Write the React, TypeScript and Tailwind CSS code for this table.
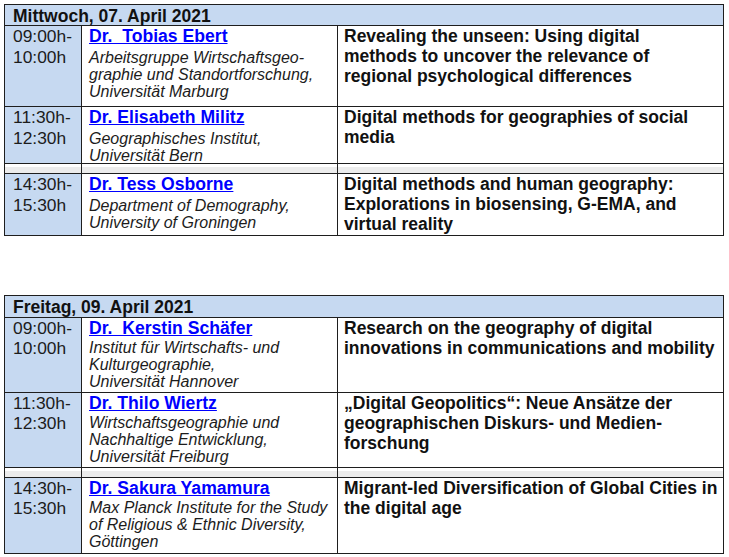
type Talk = {
  time: [string, string];
  name: string;
  affil: string[];
  title: string[];
};

const wednesday: Talk[] = [
  {
    time: ["09:00h-", "10:00h"],
    name: "Dr.\u00a0 Tobias Ebert",
    affil: ["Arbeitsgruppe Wirtschaftsgeo-", "graphie und Standortforschung,", "Universität Marburg"],
    title: ["Revealing the unseen: Using digital", "methods to uncover the relevance of", "regional psychological differences"],
  },
  {
    time: ["11:30h-", "12:30h"],
    name: "Dr. Elisabeth Militz",
    affil: ["Geographisches Institut,", "Universität Bern"],
    title: ["Digital methods for geographies of social", "media"],
  },
  {
    time: ["14:30h-", "15:30h"],
    name: "Dr. Tess Osborne",
    affil: ["Department of Demography,", "University of Groningen"],
    title: ["Digital methods and human geography:", "Explorations in biosensing, G-EMA, and", "virtual reality"],
  },
];

const friday: Talk[] = [
  {
    time: ["09:00h-", "10:00h"],
    name: "Dr.\u00a0 Kerstin Schäfer",
    affil: ["Institut für Wirtschafts- und", "Kulturgeographie,", "Universität Hannover"],
    title: ["Research on the geography of digital", "innovations in communications and mobility"],
  },
  {
    time: ["11:30h-", "12:30h"],
    name: "Dr. Thilo Wiertz",
    affil: ["Wirtschaftsgeographie und", "Nachhaltige Entwicklung,", "Universität Freiburg"],
    title: ["\u201EDigital Geopolitics\u201C: Neue Ansätze der", "geographischen Diskurs- und Medien-", "forschung"],
  },
  {
    time: ["14:30h-", "15:30h"],
    name: "Dr. Sakura Yamamura",
    affil: ["Max Planck Institute for the Study", "of Religious & Ethnic Diversity,", "Göttingen"],
    title: ["Migrant-led Diversification of Global Cities in", "the digital age"],
  },
];

const TalkCells = ({ talk, wide }: { talk: Talk; wide: boolean }) => (
  <>
    {/* time */}
    <div className={`bg-[#c6d9f1] pl-2 text-[17.4px] text-[#1c1c1c] ${wide ? "leading-[21px]" : "leading-[20px]"}`}>
      <div>{talk.time[0]}</div>
      <div>{talk.time[1]}</div>
    </div>

    {/* speaker */}
    <div className="bg-white pl-[7px] whitespace-nowrap">
      <div className={`text-[17.6px] leading-[21px] font-bold ${wide ? "mb-[2px]" : ""}`}>
        <a href="#" className="text-[#0000ff] underline">
          {talk.name}
        </a>
      </div>
      {talk.affil.map((line) => (
        <div key={line} className="text-[16px] leading-[17px] italic text-[#1c1c1c]">
          {line}
        </div>
      ))}
    </div>

    {/* title */}
    <div className="bg-white pl-[6px] whitespace-nowrap text-[17.5px] leading-[20px] font-bold text-[#111]">
      {talk.title.map((line) => (
        <div key={line}>{line}</div>
      ))}
    </div>
  </>
);

const Spacer = () => (
  <>
    {[0, 1, 2].map((i) => (
      <div key={i} className="bg-white pt-[3px]">
        <div className="h-[6px] bg-[#ececec]" />
      </div>
    ))}
  </>
);

const DayTable = ({ day, talks, rows, wide }: { day: string; talks: Talk[]; rows: string; wide: boolean }) => (
  <div className={`grid grid-cols-[76px_255px_385px] gap-px bg-[#1e1e1e] p-px w-[720px] ${rows}`}>
    <div className="col-span-3 bg-[#c6d9f1] pl-2 pt-px text-[17.5px] leading-[20px] font-bold text-[#111]">
      {day}
    </div>
    <TalkCells talk={talks[0]} wide={wide} />
    <TalkCells talk={talks[1]} wide={wide} />
    <Spacer />
    <TalkCells talk={talks[2]} wide={wide} />
  </div>
);

export default function App() {
  return (
    <div className="min-h-screen bg-white pt-[4px] pl-[4px] font-['Liberation_Sans',Arial,sans-serif]">
      <DayTable
        day="Mittwoch, 07. April 2021"
        talks={wednesday}
        rows="grid-rows-[20px_80px_56px_9px_61px]"
        wide
      />
      <div className="mt-[59px]">
        <DayTable
          day="Freitag, 09. April 2021"
          talks={friday}
          rows="grid-rows-[21px_74px_74px_9px_75px]"
          wide={false}
        />
      </div>
    </div>
  );
}
